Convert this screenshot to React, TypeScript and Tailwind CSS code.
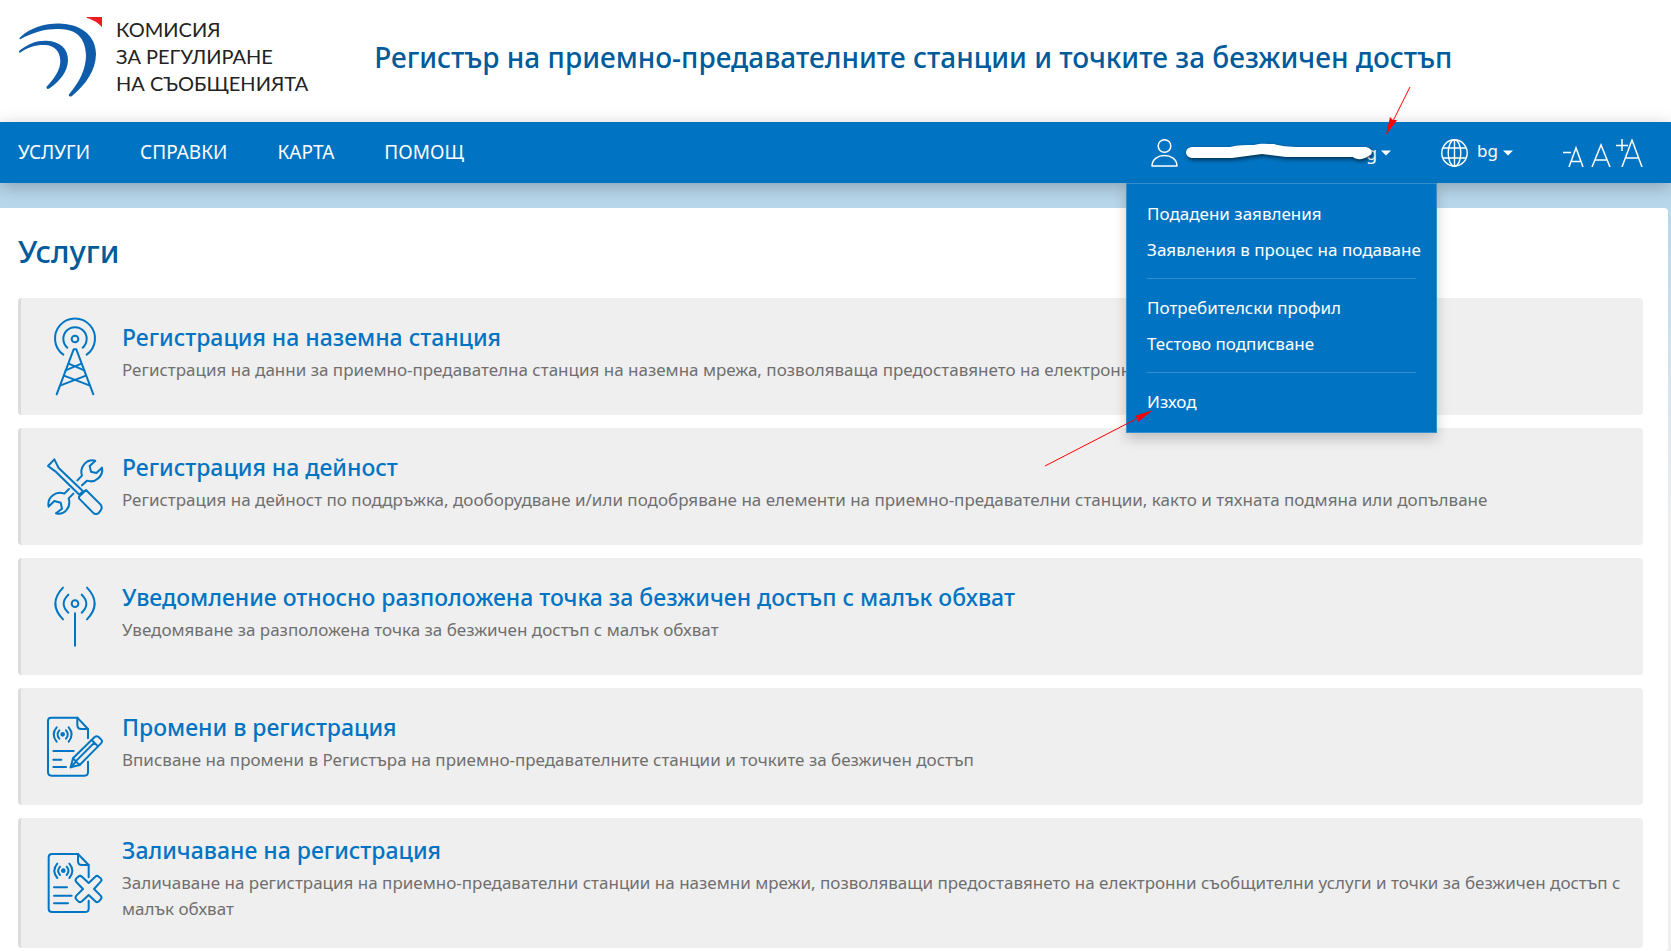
import type { ReactNode } from "react"

const navItems = ["УСЛУГИ", "СПРАВКИ", "КАРТА", "ПОМОЩ"]

const menuGroups = [
  ["Подадени заявления", "Заявления в процес на подаване"],
  ["Потребителски профил", "Тестово подписване"],
  ["Изход"],
]

function IconBox({ viewBox, children }: { viewBox: string; children: ReactNode }) {
  return (
    <svg
      viewBox={viewBox}
      className="h-20 w-[60px] shrink-0 text-[#0076c2]"
      fill="none"
      stroke="currentColor"
      strokeWidth="6"
      strokeLinecap="round"
      strokeLinejoin="round"
      aria-hidden="true"
    >
      {children}
    </svg>
  )
}

function TowerIcon() {
  return (
    <IconBox viewBox="135 82 180 240">
      <circle cx="225" cy="148" r="10" />
      <path d="M202 174 A35 35 0 1 1 248 174" />
      <path d="M190 195 A60 60 0 1 1 260 195" />
      <path d="M170 314 L221 179 H229 L280 314" />
      <path d="M206 222 L253 242 M244 222 L197 242 M192 258 L268 287 M258 258 L182 287" />
    </IconBox>
  )
}

function ToolsIcon() {
  return (
    <IconBox viewBox="135 67 180 240">
      <path d="M144 124 L163 104 L176 130 L249 200 L238 210 L166 140 Z" />
      <path d="M237 216 L258 196 L302 240 Q308 248 302 257 L297 264 Q288 272 279 264 L237 221 Z" />
      <path d="M232 167 L246 153 C238 128 258 102 286 108 L269 124 L273 141 L289 145 L306 129 C311 153 287 177 261 168 L246 182" />
      <path d="M207 193 L193 207 C168 198 140 218 146 246 L163 229 L182 234 L186 252 L168 266 C190 273 215 250 206 221 L220 207" />
    </IconBox>
  )
}

function AntennaIcon() {
  return (
    <IconBox viewBox="135 67 180 240">
      <circle cx="225" cy="147" r="10" />
      <path d="M205 120 Q177 147 205 174 M245 120 Q273 147 245 174" />
      <path d="M189 99 Q143 147 189 194 M261 99 Q307 147 261 194" />
      <path d="M225 176 V273" />
    </IconBox>
  )
}

function EditIcon() {
  return (
    <IconBox viewBox="135 52 180 240">
      <path d="M264 146 V118 L232 84 H153 Q144 84 144 94 V247 Q144 258 155 258 H254 Q264 258 264 247 V216" />
      <path d="M232 84 V106 Q232 118 244 118 H264" />
      <circle cx="188" cy="134" r="4" fill="currentColor" />
      <path d="M178 122 Q167 134 178 147 M198 122 Q209 134 198 147 M170 113 Q152 134 170 156 M206 113 Q224 134 206 156" />
      <path d="M160 184 H221 M160 210 H184 M160 232 H198" />
      <path d="M212 233 L219 206 L284 142 Q290 137 296 142 L303 149 Q309 155 303 161 L239 226 Z" />
      <path d="M219 206 L227 214 M227 215 L282 160 M231 218 L239 226 M275 151 L294 170 M212 233 L227 217" />
    </IconBox>
  )
}

function DeleteIcon() {
  return (
    <IconBox viewBox="135 87 180 240">
      <path d="M266 190 V153 L234 120 H156 Q146 120 146 130 V284 Q146 294 156 294 H255 Q266 294 266 284 V260" />
      <path d="M234 120 V142 Q234 153 246 153 H266" />
      <circle cx="190" cy="170" r="4" fill="currentColor" />
      <path d="M180 158 Q169 170 180 183 M200 158 Q211 170 200 183 M172 149 Q154 170 172 192 M208 149 Q226 170 208 192" />
      <path d="M162 220 H201 M162 245 H215 M162 268 H204" />
      <path d="M266 207 L286 188 Q291 183 296 188 L302 193 Q307 198 302 203 L282 225 L302 245 Q307 250 302 256 L297 262 Q291 267 286 262 L266 243 L246 262 Q240 267 235 262 L229 256 Q224 250 229 245 L249 225 L229 204 Q224 199 229 193 L235 188 Q240 183 246 188 Z" />
    </IconBox>
  )
}

const services = [
  {
    icon: <TowerIcon />,
    title: "Регистрация на наземна станция",
    text: "Регистрация на данни за приемно-предавателна станция на наземна мрежа, позволяваща предоставянето на електронни съобщителни услуги",
  },
  {
    icon: <ToolsIcon />,
    title: "Регистрация на дейност",
    text: "Регистрация на дейност по поддръжка, дооборудване и/или подобряване на елементи на приемно-предавателни станции, както и тяхната подмяна или допълване",
  },
  {
    icon: <AntennaIcon />,
    title: "Уведомление относно разположена точка за безжичен достъп с малък обхват",
    text: "Уведомяване за разположена точка за безжичен достъп с малък обхват",
  },
  {
    icon: <EditIcon />,
    title: "Промени в регистрация",
    text: "Вписване на промени в Регистъра на приемно-предавателните станции и точките за безжичен достъп",
  },
  {
    icon: <DeleteIcon />,
    title: "Заличаване на регистрация",
    text: "Заличаване на регистрация на приемно-предавателни станции на наземни мрежи, позволяващи предоставянето на електронни съобщителни услуги и точки за безжичен достъп с малък обхват",
  },
]

function Logo() {
  return (
    <a href="#" className="flex shrink-0 items-start gap-3 text-[#222]">
      <svg viewBox="54 48 258 246" className="h-[82px] w-[86px]" aria-hidden="true">
        <path
          fill="#0f5cab"
          d="M59 113 C95 80 140 69 185 71 C250 74 288 112 288 163 C287 212 258 253 216 288 Q208 293 206 284 C240 245 258 205 258 165 C256 112 228 88 178 87 C140 86 100 95 61 118 Q57 117 59 113 Z"
        />
        <path
          fill="#0f5cab"
          d="M57 153 C85 130 110 121 140 122 C180 124 205 146 204 182 C202 215 180 243 149 265 Q140 270 139 261 C164 235 181 209 181 182 C180 152 162 136 135 135 C108 134 83 142 60 158 Q56 158 57 153 Z"
        />
        <path fill="#ec1c24" d="M260 51 H306 V82 C296 69 278 58 260 54 Z" />
      </svg>
      <span className="font-['Lato','Noto_Sans',sans-serif] text-[20px] leading-[27px] whitespace-nowrap">
        КОМИСИЯ
        <br />
        ЗА РЕГУЛИРАНЕ
        <br />
        НА СЪОБЩЕНИЯТА
      </span>
    </a>
  )
}

function Caret() {
  return (
    <svg viewBox="0 0 10 6" className="h-[6px] w-[10px] shrink-0" fill="currentColor" aria-hidden="true">
      <path d="M0 0.5 H10 L5 5.5 Z" />
    </svg>
  )
}

function UserMenu() {
  return (
    <div className="relative flex items-center">
      <button type="button" aria-label="Потребителско меню" aria-expanded="true" className="flex h-[61px] items-center">
        <svg viewBox="0 0 27 28" className="h-7 w-[27px]" fill="none" stroke="currentColor" strokeWidth="1.5" aria-hidden="true">
          <circle cx="13.5" cy="7" r="6.3" />
          <path d="M1 27 C1 13 26 13 26 27 Z" strokeLinejoin="round" />
        </svg>
        <span className="relative ml-2 flex w-[191px] justify-end text-lg leading-6">
          <svg viewBox="0 0 191 24" className="absolute top-0 left-0 h-6 w-[191px] overflow-visible drop-shadow-[1px_2px_2px_#0009]" aria-hidden="true">
            <path
              fill="#fff"
              d="M6 6 H44 C52 4 60 4 68 4 C74 2 82 3 88 3 C94 5 102 6 114 6 H178 C187 6 188 14 182 15 C178 19 170 19 167 16 H100 C92 15 84 14 76 13 C66 14 56 16 46 17 H6 C-2 16 -2 7 6 6 Z"
            />
          </svg>
          g
        </span>
        <span className="ml-1">
          <Caret />
        </span>
      </button>

      <ul className="absolute top-full -left-[25px] z-10 w-[311px] border border-white/20 bg-[#0074c2] px-5 py-3 shadow-[0_6px_12px_rgba(0,0,0,0.2)]">
        {menuGroups.map((group, i) => (
          <li key={i} className={i > 0 ? "mt-[10px] border-t border-white/20 pt-[11px]" : ""}>
            {group.map((item) => (
              <a key={item} href="#" className="block text-[17px] leading-9 whitespace-nowrap">
                {item}
              </a>
            ))}
          </li>
        ))}
      </ul>

      {/* pointers to the menu toggle and the exit item */}
      <svg viewBox="0 0 26 50" className="absolute -top-[36px] right-[-20px] z-20 h-[50px] w-[26px]" aria-hidden="true">
        <path d="M25 1 L7 37" stroke="#f00" strokeWidth="1" />
        <path d="M1 49 L5 31 L8 34 L12 34 Z" fill="#f00" />
      </svg>
      <svg viewBox="0 0 110 58" className="absolute top-[287px] -left-[107px] z-20 h-[58px] w-[110px]" aria-hidden="true">
        <path d="M1 57 L94 9" stroke="#f00" strokeWidth="1" />
        <path d="M109 1 L91 7 L94 9 L94 13 Z" fill="#f00" />
      </svg>
    </div>
  )
}

function TopNav() {
  return (
    <nav className="relative z-10 flex h-[61px] items-center bg-[#0074c2] pr-7 pl-[18px] text-white shadow-[0_4px_16px_rgba(0,0,0,0.25)]">
      <div className="flex gap-[50px] text-[19px]">
        {navItems.map((item) => (
          <a key={item} href="#">
            {item}
          </a>
        ))}
      </div>
      <div className="ml-auto flex items-center">
        <UserMenu />
        <button type="button" className="ml-[50px] flex items-center">
          <svg viewBox="0 0 27 28" className="h-7 w-[27px]" fill="none" stroke="currentColor" strokeWidth="1.4" aria-hidden="true">
            <ellipse cx="13.5" cy="14" rx="12.7" ry="13.2" />
            <ellipse cx="13.5" cy="14" rx="6.3" ry="13.2" />
            <path d="M13.5 1 V27 M2 9 H25 M2 19 H25" />
          </svg>
          <span className="mr-[5px] ml-[9px] pb-1 text-[17px] leading-6">bg</span>
          <Caret />
        </button>
        <div className="ml-[50px] flex items-end gap-1">
          <button type="button" aria-label="Намали шрифта">
            <svg viewBox="0 0 21 28" className="block h-7 w-[21px]" fill="none" stroke="currentColor" strokeWidth="1.5" aria-hidden="true">
              <path d="M0 13.5 H8 M6 28 L13 9 L20 28 M8 22.5 H18" />
            </svg>
          </button>
          <button type="button" aria-label="Нормален шрифт">
            <svg viewBox="0 0 24 28" className="block h-7 w-6" fill="none" stroke="currentColor" strokeWidth="1.5" aria-hidden="true">
              <path d="M4 28 L13 6 L22 28 M7 21 H19" />
            </svg>
          </button>
          <button type="button" aria-label="Увеличи шрифта">
            <svg viewBox="0 0 27 28" className="block h-7 w-[27px]" fill="none" stroke="currentColor" strokeWidth="1.5" aria-hidden="true">
              <path d="M0 6.5 H12 M6 0 V12 M6 28 L16 1 L26 28 M9.5 19 H22.5" />
            </svg>
          </button>
        </div>
      </div>
    </nav>
  )
}

export default function App() {
  return (
    <div className="flex min-h-screen flex-col bg-white font-['Noto_Sans',sans-serif]">
      <header className="flex h-[122px] shrink-0 items-center pr-7 pb-2 pl-[18px]">
        <Logo />
        <h2 className="ml-[66px] text-[28px] leading-9 font-medium text-[#005b9b]">
          Регистър на приемно-предавателните станции и точките за безжичен достъп
        </h2>
      </header>
      <TopNav />
      <div className="flex grow flex-col bg-linear-to-b from-[#b8d7eb] from-5% to-[#efefef] to-45% pt-[25px] pr-[3px]">
        <main className="grow rounded-r bg-white pr-[25px] pl-[18px]">
          <h1 className="pt-[25px] pb-[29px] text-[31px] leading-9 font-medium text-[#005b9b]">Услуги</h1>
          <ul className="flex flex-col gap-[13px]">
            {services.map((service) => (
              <li
                key={service.title}
                className="flex min-h-[117px] items-center rounded border-l-[3px] border-[#dcdcdc] bg-[#efefef] py-[18px] pr-2 pl-6"
              >
                {service.icon}
                <div className="ml-[17px] pb-2">
                  <h3 className="mb-[5px] text-[23px] leading-[29px] font-medium text-[#0074c2]">
                    <a href="#">{service.title}</a>
                  </h3>
                  <p className="text-[17px] leading-[26px] text-[#6f6f6f]">{service.text}</p>
                </div>
              </li>
            ))}
          </ul>
        </main>
      </div>
    </div>
  )
}
